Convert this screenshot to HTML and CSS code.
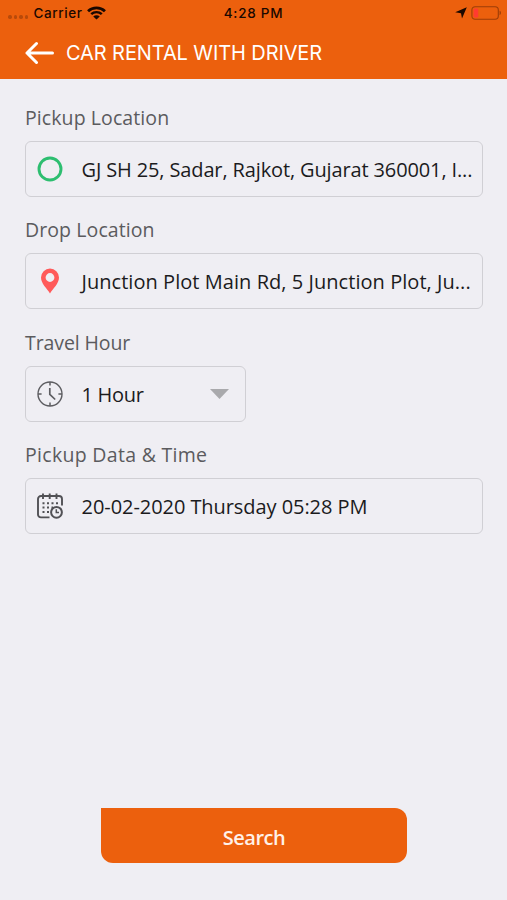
FILE: index.html
```html
<!DOCTYPE html>
<html lang="en">

<head>
    <meta charset="UTF-8">
    <meta name="viewport" content="width=device-width, initial-scale=1.0">
    <title>Car Rental With Driver</title>
    <link rel="stylesheet" href="styles.css">
</head>

<body>

    <header class="header">
        <div class="status-bar">
            <div class="status-left">
                <span class="signal"><i></i><i></i><i></i><i></i></span>
                <span class="carrier">Carrier</span>
                <svg class="wifi" viewBox="0 0 18 14" width="19" height="14" preserveAspectRatio="none">
                    <path d="M1 5.2a11.4 11.4 0 0 1 16 0" fill="none" stroke="#1a0800" stroke-width="2.6" />
                    <path d="M4 8.2a7.2 7.2 0 0 1 10 0" fill="none" stroke="#1a0800" stroke-width="2.3" />
                    <path d="M9 13.6L5.9 10.5a4.4 4.4 0 0 1 6.200 0z" fill="#1a0800" />
                </svg>
            </div>
            <span class="time">4:28 PM</span>
            <div class="status-right">
                <svg viewBox="0 0 12 12" width="12" height="12">
                    <path d="M11.800 0.200L7 11.600L6 6.200L0.200 5.200z" fill="#1a0800" />
                </svg>
                <svg class="battery" viewBox="0 0 31 14" width="31" height="14">
                    <rect x="0.9" y="0.7" width="26.4" height="12.6" rx="3.2" fill="none" stroke="#9c3d08" stroke-width="1.1" />
                    <rect x="2.6" y="2.4" width="4.6" height="9.2" rx="1.4" fill="#ff3b30" />
                    <path d="M28.6 4.8v4.400c1.800-.6 1.800-3.800 0-4.400z" fill="#9c3d08" />
                </svg>
            </div>
        </div>
        <div class="nav-bar">
            <svg class="back" viewBox="0 0 30 24" width="30" height="24">
                <path d="M11.500 2.500L2 12L11.500 21.500M2 12H27.500" fill="none" stroke="#fff" stroke-width="3" stroke-linecap="round" stroke-linejoin="round" />
            </svg>
            <h1 class="title">CAR RENTAL WITH DRIVER</h1>
        </div>
    </header>

    <main class="form">
        <div class="field">
            <div class="label label-pickup">Pickup Location</div>
            <div class="box">
                <svg class="icon" viewBox="0 0 26 26" width="26" height="26">
                    <circle cx="13" cy="13" r="11" fill="none" stroke="#2dbe70" stroke-width="2.9" />
                </svg>
                <span class="value value-pickup">GJ SH 25, Sadar, Rajkot, Gujarat 360001, I...</span>
            </div>
        </div>

        <div class="field">
            <div class="label label-drop">Drop Location</div>
            <div class="box">
                <svg class="icon" viewBox="0 0 26 26" width="26" height="26">
                    <path d="M13 .5a9 9 0 0 0-9 9C4 15.500 10 20.500 13 25.500C16 20.500 22 15.500 22 9.500a9 9 0 0 0-9-9zM13 5.100a4.400 4.400 0 1 1 0 8.800a4.400 4.400 0 0 1 0-8.800z" fill="#ff5a5a" fill-rule="evenodd" />
                </svg>
                <span class="value value-drop">Junction Plot Main Rd, 5 Junction Plot, Ju...</span>
            </div>
        </div>

        <div class="field">
            <div class="label label-hour">Travel Hour</div>
            <div class="box box-small">
                <svg class="icon" viewBox="0 0 26 26" width="26" height="26" fill="none" stroke="#5d5d61">
                    <circle cx="13" cy="13" r="12" stroke-width="1.400" />
                    <path d="M13 1v3.600M13 21.400V25M1 13h3.600M21.400 13H25" stroke-width="1.500" />
                    <path d="M12.800 7v6.300l5.400 5.200" stroke-width="1.700" />
                </svg>
                <span class="value value-hour">1 Hour</span>
                <svg class="caret" viewBox="0 0 19 10" width="19" height="10">
                    <path d="M0 0H19L9.500 10z" fill="#a9a9ac" />
                </svg>
            </div>
        </div>

        <div class="field">
            <div class="label label-date">Pickup Data &amp; Time</div>
            <div class="box">
                <svg class="icon" viewBox="0 0 26 26" width="26" height="26" fill="none" stroke="#515155">
                    <path d="M12.500 24.400H4a3 3 0 0 1-3-3V6a3 3 0 0 1 3-3H22a3 3 0 0 1 3 3v6.500" stroke-width="1.900" />
                    <path d="M6 .5v5.500M12.700 .5v5.500M19.500 .5v5.500" stroke-width="1.900" />
                    <path d="M5.500 10.200h2M10 10.200h2M14.500 10.200h2M19 10.200h2M5.500 14.600h2M10 14.600h2M14.500 14.600h1.500M5.500 19h2M10 19h2" stroke-width="2" />
                    <circle cx="19.500" cy="19.300" r="5.400" stroke-width="2" />
                    <path d="M19.300 16.300v3.200h2.700" stroke-width="1.500" />
                </svg>
                <span class="value value-date">20-02-2020 Thursday 05:28 PM</span>
            </div>
        </div>
    </main>

    <button class="search-btn">Search</button>

</body>

</html>
```
FILE: styles.css
```css
* {
    box-sizing: border-box;
}

body {
    margin: 0;
    height: 900px;
    display: flex;
    flex-direction: column;
    background-color: #efeef3;
    font-family: 'Open Sans', 'Noto Sans', sans-serif;
    overflow: hidden;
}

/* Header */
.header {
    height: 79px;
    background-color: #ec600d;
}

.status-bar {
    display: grid;
    grid-template-columns: 1fr auto 1fr;
    align-items: center;
    height: 26px;
    padding: 0 5px 0 8px;
    font-family: Inter, sans-serif;
    font-size: 13.5px;
    font-weight: 500;
    color: #1a0800;
}

.status-left,
.status-right {
    display: flex;
    align-items: center;
}

.status-right {
    justify-content: flex-end;
    gap: 4px;
}

.signal {
    display: flex;
    gap: 2px;
    margin: 8px 5px 0 0;
}

.signal i {
    width: 3.6px;
    height: 3.6px;
    border-radius: 50%;
    background-color: #b84a0a;
}

.carrier {
    letter-spacing: 0.6px;
}

.time {
    margin-right: 3px;
    letter-spacing: 0.75px;
}

.wifi {
    margin-left: 5px;
}

.nav-bar {
    display: flex;
    align-items: center;
    height: 53px;
    padding-left: 25px;
}

.title {
    margin: 0 0 0 11px;
    font-family: Inter, sans-serif;
    font-size: 20px;
    font-weight: 400;
    letter-spacing: -0.1px;
    color: #fff;
}

/* Form */
.form {
    flex: 1;
    padding: 26px 24px 0 25px;
}

.field {
    margin-bottom: 20.3px;
}

.label {
    height: 26px;
    line-height: 26px;
    margin-bottom: 10px;
    font-size: 19.5px;
    color: #5b5b5e;
    white-space: nowrap;
}

.label-pickup,
.label-drop {
    letter-spacing: 0.09px;
}

.label-hour {
    letter-spacing: -0.1px;
}

.label-date {
    letter-spacing: 0.3px;
}

.box {
    display: flex;
    align-items: center;
    height: 56px;
    padding: 0 9px 0 11px;
    border: 1.5px solid #d0cfd4;
    border-radius: 6px;
}

.box-small {
    width: 221px;
    padding-right: 16px;
}

.icon {
    flex: none;
    margin-right: 18.5px;
}

.value {
    flex: 1;
    padding-top: 1px;
    font-size: 20px;
    color: #1b1b1d;
    white-space: nowrap;
}

.value-pickup {
    letter-spacing: -0.13px;
}

.value-drop {
    letter-spacing: 0.05px;
}

.value-hour {
    letter-spacing: -0.3px;
}

.value-date {
    letter-spacing: -0.06px;
}

.search-btn {
    width: 306px;
    height: 55px;
    margin: 0 0 37px 101px;
    padding: 3px 0 0;
    border: none;
    border-radius: 0 12px 12px 12px;
    background-color: #ec600d;
    color: #fff1e8;
    font-family: inherit;
    font-size: 20px;
    font-weight: 600;
    letter-spacing: -0.5px;
}
```
